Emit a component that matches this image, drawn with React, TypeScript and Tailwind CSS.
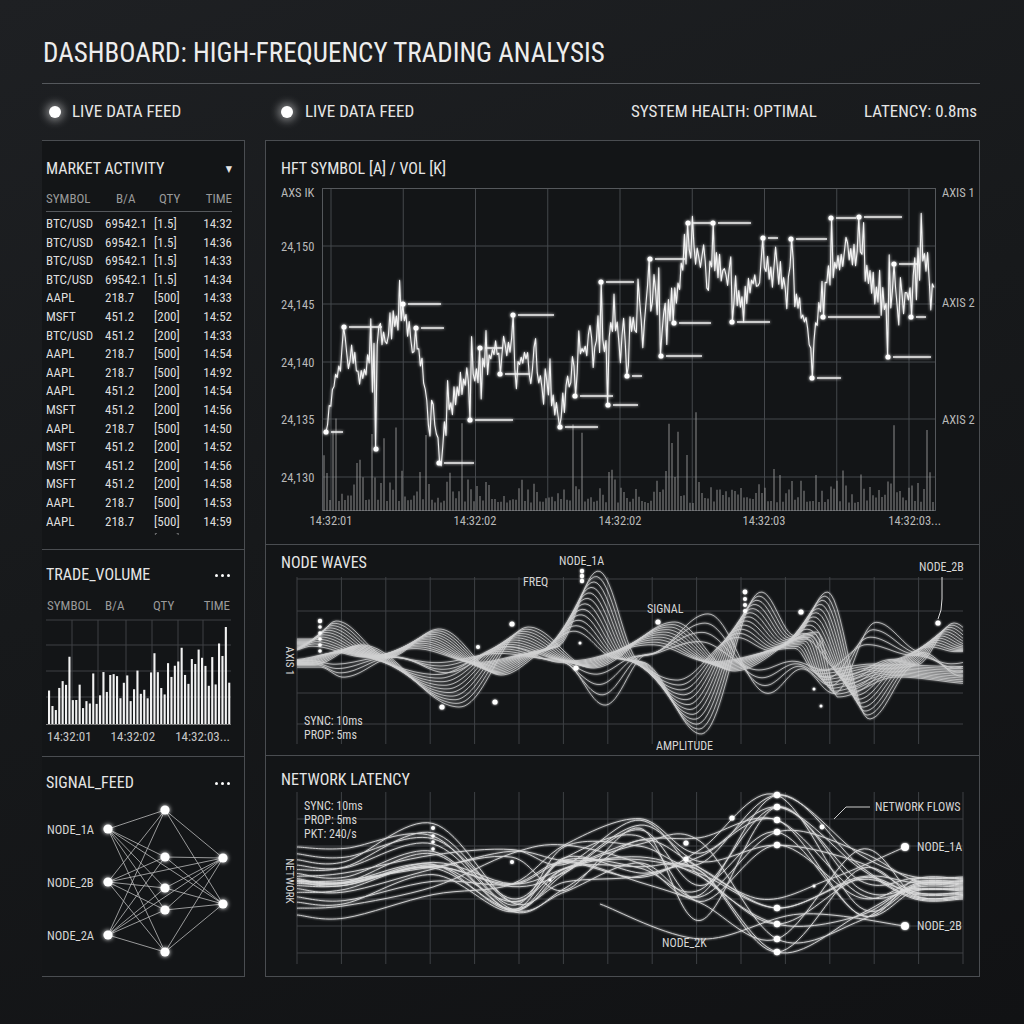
import React from "react";

type Pt = [number, number];

const rng = (seed: number) => () => {
  seed = (seed + 0x6d2b79f5) | 0;
  let t = Math.imul(seed ^ (seed >>> 15), 1 | seed);
  t = (t + Math.imul(t ^ (t >>> 7), 61 | t)) ^ t;
  return ((t ^ (t >>> 14)) >>> 0) / 4294967296;
};

const smoothPath = (pts: Pt[]) => {
  let d = `M${pts[0][0]},${pts[0][1].toFixed(1)}`;
  for (let i = 0; i < pts.length - 1; i++) {
    const p0 = pts[i - 1] || pts[i];
    const p1 = pts[i];
    const p2 = pts[i + 1];
    const p3 = pts[i + 2] || p2;
    const c1x = p1[0] + (p2[0] - p0[0]) / 6;
    const c1y = p1[1] + (p2[1] - p0[1]) / 6;
    const c2x = p2[0] - (p3[0] - p1[0]) / 6;
    const c2y = p2[1] - (p3[1] - p1[1]) / 6;
    d += ` C${c1x.toFixed(1)},${c1y.toFixed(1)} ${c2x.toFixed(1)},${c2y.toFixed(1)} ${p2[0]},${p2[1].toFixed(1)}`;
  }
  return d;
};

const cosKeys = (keys: Pt[], x: number) => {
  if (x <= keys[0][0]) return keys[0][1];
  for (let i = 0; i < keys.length - 1; i++) {
    const [x0, y0] = keys[i];
    const [x1, y1] = keys[i + 1];
    if (x <= x1) {
      const t = (x - x0) / (x1 - x0);
      const s = (1 - Math.cos(Math.PI * t)) / 2;
      return y0 + (y1 - y0) * s;
    }
  }
  return keys[keys.length - 1][1];
};

const linKeys = (keys: Pt[], x: number) => {
  if (x <= keys[0][0]) return keys[0][1];
  for (let i = 0; i < keys.length - 1; i++) {
    const [x0, y0] = keys[i];
    const [x1, y1] = keys[i + 1];
    if (x <= x1) return y0 + ((y1 - y0) * (x - x0)) / (x1 - x0);
  }
  return keys[keys.length - 1][1];
};

const rows = [
  ["BTC/USD", "69542.1", "[1.5]", "14:32"],
  ["BTC/USD", "69542.1", "[1.5]", "14:36"],
  ["BTC/USD", "69542.1", "[1.5]", "14:33"],
  ["BTC/USD", "69542.1", "[1.5]", "14:34"],
  ["AAPL", "218.7", "[500]", "14:33"],
  ["MSFT", "451.2", "[200]", "14:52"],
  ["BTC/USD", "451.2", "[200]", "14:33"],
  ["AAPL", "218.7", "[500]", "14:54"],
  ["AAPL", "218.7", "[500]", "14:92"],
  ["AAPL", "451.2", "[200]", "14:54"],
  ["MSFT", "451.2", "[200]", "14:56"],
  ["AAPL", "218.7", "[500]", "14:50"],
  ["MSFT", "451.2", "[200]", "14:52"],
  ["MSFT", "451.2", "[200]", "14:56"],
  ["MSFT", "451.2", "[200]", "14:58"],
  ["AAPL", "218.7", "[500]", "14:53"],
  ["AAPL", "218.7", "[500]", "14:59"],
  ["BTC/USD", "451.2", "[200]", "14:33"],
];

const Dots = () => (
  <span className="flex gap-[3px]">
    <i className="h-[3px] w-[3px] rounded-full bg-white" />
    <i className="h-[3px] w-[3px] rounded-full bg-white" />
    <i className="h-[3px] w-[3px] rounded-full bg-white" />
  </span>
);

const Glow = ({ id, d = 1.6 }: { id: string; d?: number }) => (
  <filter id={id} x="-20%" y="-20%" width="140%" height="140%">
    <feGaussianBlur stdDeviation={d} result="b" />
    <feMerge>
      <feMergeNode in="b" />
      <feMergeNode in="SourceGraphic" />
    </feMerge>
  </filter>
);

// main price chart
const priceKeys: Pt[] = [
  [326, 420], [345, 345], [360, 380], [380, 340], [403, 315], [420, 360], [440, 445],
  [455, 395], [480, 370], [510, 345], [535, 370], [560, 410], [580, 355], [600, 330],
  [625, 330], [650, 300], [670, 310], [690, 250], [720, 270], [740, 300], [765, 270],
  [790, 280], [812, 340], [830, 265], [860, 255], [880, 300], [905, 305], [920, 245], [935, 290],
];

const markers: [number, number, number][] = [
  [326, 433, 12], [344, 328, 33], [376, 450, 0], [403, 305, 33], [416, 329, 23],
  [439, 464, 30], [470, 421, 38], [480, 349, 17], [500, 375, 25], [513, 316, 36],
  [560, 428, 33], [575, 397, 33], [601, 283, 28], [608, 406, 25], [627, 377, 10],
  [650, 260, 30], [661, 357, 36], [674, 324, 32], [688, 224, 20], [713, 224, 33],
  [732, 323, 33], [763, 239, 10], [791, 240, 31], [812, 379, 24], [823, 318, 52],
  [831, 219, 20], [859, 218, 38], [888, 358, 38], [894, 265, 18], [911, 318, 10],
];

const PriceChart = () => {
  const r = rng(11);
  const pts: Pt[] = [];
  let flip = 1;
  for (let x = 326; x <= 935; x += 1.6) {
    const b = linKeys(priceKeys, x);
    flip = -flip;
    let n = flip * r() * 14 + (r() - 0.5) * 10;
    if (r() < 0.2) n += (r() < 0.5 ? -1 : 1) * (14 + r() * 26);
    pts.push([x, Math.max(205, Math.min(470, b + n))]);
  }
  markers.forEach(([mx, my]) => {
    let best = 0;
    pts.forEach((p, i) => {
      if (Math.abs(p[0] - mx) < Math.abs(pts[best][0] - mx)) best = i;
    });
    pts[best] = [pts[best][0], my];
  });
  const line = pts.map((p, i) => `${i ? "L" : "M"}${p[0].toFixed(1)},${p[1].toFixed(1)}`).join("");
  const bars: number[][] = [];
  for (let x = 324; x <= 934; x += 3) {
    let h = 8 + r() * r() * 36;
    if (r() < 0.08) h += 25 + r() * 55;
    bars.push([x, h]);
  }
  const gridX = Array.from({ length: 9 }, (_, k) => 331 + k * 72.25);
  const gridY = [247, 305, 363, 420, 478];
  const yLabels = ["24,150", "24,145", "24,140", "24,135", "24,130"];
  return (
    <svg width={713} height={365} className="block">
      <defs>
        <Glow id="pg" d={1.4} />
      </defs>
      <g transform="translate(-266,-180)">
        {gridX.map((x) => (
          <line key={x} x1={x} x2={x} y1={190} y2={512} stroke="#45484c" strokeWidth={1} />
        ))}
        {gridY.map((y) => (
          <line key={y} x1={322} x2={936} y1={y} y2={y} stroke="#45484c" strokeWidth={1} />
        ))}
        <rect x={322.5} y={189.5} width={613} height={322} fill="none" stroke="#55585c" />
        {bars.map(([x, h]) => (
          <line key={x} x1={x} x2={x} y1={512} y2={512 - h} stroke="#9a9a9a" strokeWidth={1.2} opacity={0.75} />
        ))}
        <g filter="url(#pg)">
          <path d={line} fill="none" stroke="#f4f4f4" strokeWidth={1.1} strokeLinejoin="round" />
          {markers.map(([x, y, l]) => (
            <g key={`${x}-${y}`}>
              <circle cx={x} cy={y} r={2.6} fill="#fff" />
              {l > 0 && <line x1={x + 5} x2={x + 5 + l} y1={y} y2={y} stroke="#f0f0f0" strokeWidth={1.5} />}
            </g>
          ))}
        </g>
        <g fill="#b9b9b9" fontSize={12.5}>
          <text x={281} y={198}>AXS IK</text>
          {yLabels.map((t, i) => (
            <text key={t} x={281} y={gridY[i] + 4.5}>{t}</text>
          ))}
          <text x={942} y={198}>AXIS 1</text>
          <text x={942} y={308}>AXIS 2</text>
          <text x={942} y={425}>AXIS 2</text>
          <text x={331} y={526} textAnchor="middle">14:32:01</text>
          <text x={475} y={526} textAnchor="middle">14:32:02</text>
          <text x={620} y={526} textAnchor="middle">14:32:02</text>
          <text x={764} y={526} textAnchor="middle">14:32:03</text>
          <text x={941} y={526} textAnchor="end">14:32:03...</text>
        </g>
      </g>
    </svg>
  );
};

// node waves
const W1: Pt[] = [
  [297, 18], [320, 36], [373, 0], [423, 28], [485, -18], [540, 10], [582, 86], [625, -5],
  [685, -77], [745, 65], [779, 21], [811, 65], [853, -62], [900, -8], [938, 34], [963, 18],
];
const W2: Pt[] = [
  [297, -8], [345, 12], [443, -50], [512, 30], [576, -11], [658, 35], [717, -14],
  [801, 25], [821, -40], [880, -20], [963, -27],
];

const wavePath = (keys: Pt[], s: number, shift: number) => {
  let d = "";
  for (let x = 297; x <= 963; x += 3) {
    const y = 658 - s * cosKeys(keys, x - shift);
    d += `${x === 297 ? "M" : "L"}${x},${y.toFixed(1)}`;
  }
  return d;
};

const NodeWaves = () => {
  const gridX = Array.from({ length: 15 }, (_, k) => 297 + k * 44.4);
  const gridY = [580, 612, 694, 725];
  const fam1 = [
    ...Array.from({ length: 12 }, (_, i) => wavePath(W1, 0.3 + (0.7 * i) / 11, i * 2.2 - 8)),
    ...Array.from({ length: 4 }, (_, i) => wavePath(W1, -0.2 - 0.12 * i, 14 + i * 3)),
  ];
  const fam2 = Array.from({ length: 10 }, (_, i) => wavePath(W2, 0.35 + (0.65 * i) / 9, i * 2.5 - 6));
  const dots: [number, number, number][] = [
    [320, 622, 2.2], [320, 628, 1.8], [320, 634, 1.8], [320, 640, 1.8], [320, 646, 1.8], [320, 652, 1.8],
    [478, 648, 2], [512, 625, 2.6], [495, 703, 2.6], [442, 708, 2.6], [582, 572, 2.2], [582, 577, 2.2],
    [582, 582, 2.2], [576, 669, 2.6], [580, 644, 1.5], [658, 623, 2.6], [745, 593, 2.4], [745, 600, 2],
    [745, 606, 2], [745, 612, 2], [801, 613, 2.6], [814, 690, 1.5], [821, 707, 1.5], [938, 624, 2.6],
  ];
  return (
    <svg width={713} height={182} className="block overflow-visible">
      <defs>
        <Glow id="wg" d={1.3} />
      </defs>
      <g transform="translate(-266,-574)">
        {gridX.map((x) => (
          <line key={x} x1={x} x2={x} y1={578} y2={745} stroke="#3e4145" />
        ))}
        {gridY.map((y) => (
          <line key={y} x1={297} x2={963} y1={y} y2={y} stroke="#3e4145" />
        ))}
        <g filter="url(#wg)" fill="none" stroke="#ffffff" strokeWidth={0.8} opacity={0.8}>
          {fam1.map((d, i) => (
            <path key={`a${i}`} d={d} />
          ))}
          {fam2.map((d, i) => (
            <path key={`b${i}`} d={d} />
          ))}
        </g>
        <line x1={297} x2={963} y1={658} y2={658} stroke="#fff" strokeWidth={2.6} filter="url(#wg)" />
        <g fill="#fff" filter="url(#wg)">
          {dots.map(([x, y, r]) => (
            <circle key={`${x}-${y}`} cx={x} cy={y} r={r} />
          ))}
        </g>
        <path d="M942,578 L942,600 Q942,612 938,620" fill="none" stroke="#ddd" strokeWidth={1} />
        <g fill="#d6d6d6" fontSize={12}>
          <text x={559} y={566}>NODE_1A</text>
          <text x={523} y={587}>FREQ</text>
          <text x={647} y={614}>SIGNAL</text>
          <text x={919} y={572}>NODE_2B</text>
          <text x={656} y={751}>AMPLITUDE</text>
          <text x={304} y={726}>SYNC: 10ms</text>
          <text x={304} y={740}>PROP: 5ms</text>
          <text x={290} y={658} textAnchor="middle" transform="rotate(90 286 658)" fontSize={11}>
            AXIS 1
          </text>
        </g>
      </g>
    </svg>
  );
};

// network latency
const NetworkLatency = () => {
  const r = rng(31);
  const nodeYs = [796, 808, 821, 833, 846, 909, 925, 940, 953];
  const gridX = Array.from({ length: 16 }, (_, k) => 297 + k * 44.4);
  const gridY = [820, 847, 900, 927, 954];
  const lines: string[] = [];
  for (let i = 0; i < 20; i++) {
    const t = i / 19;
    const c = (t - 0.5) * 2;
    const y0 = 882 + c * Math.abs(c) * 34;
    const pts: Pt[] = [
      [297, y0],
      [345, y0 + (r() - 0.5) * 8],
      [433, 829 + t * 60 + (r() - 0.5) * 24],
      [512, 850 + r() * 75],
      [565, 870 + (r() - 0.5) * 50],
      [640, 818 + r() * 70],
      [700, 825 + r() * 115],
      [777, nodeYs[i % 9]],
      [860, 850 + r() * 75],
      [915, 878 + t * 22],
      [963, 878 + t * 22],
    ];
    lines.push(smoothPath(pts));
  }
  lines.push(smoothPath([[686, 860], [760, 900], [830, 880], [905, 848]]));
  lines.push(smoothPath([[600, 905], [700, 940], [800, 915], [905, 927]]));
  const dots: [number, number, number][] = [
    [433, 829, 2], [433, 837, 1.8], [433, 843, 1.8], [433, 850, 1.8],
    [732, 819, 2.6], [686, 844, 2.6], [686, 860, 2.6], [822, 828, 2.4], [814, 887, 1.5],
    [512, 863, 2], [550, 881, 1.5],
    ...nodeYs.map((y) => [777, y, 3.2] as [number, number, number]),
    [905, 848, 4], [905, 927, 4],
  ];
  return (
    <svg width={713} height={186} className="block overflow-visible">
      <defs>
        <Glow id="ng" d={1.3} />
      </defs>
      <g transform="translate(-266,-791)">
        {gridX.map((x) => (
          <line key={x} x1={x} x2={x} y1={793} y2={965} stroke="#3e4145" />
        ))}
        {gridY.map((y) => (
          <line key={y} x1={297} x2={963} y1={y} y2={y} stroke="#3e4145" />
        ))}
        <g filter="url(#ng)" fill="none" stroke="#fff" strokeWidth={0.9} opacity={0.85}>
          {lines.map((d, i) => (
            <path key={i} d={d} />
          ))}
        </g>
        <g fill="#fff" filter="url(#ng)">
          {dots.map(([x, y, rr]) => (
            <circle key={`${x}-${y}`} cx={x} cy={y} r={rr} />
          ))}
        </g>
        <path d="M834,820 L846,808 L870,808" fill="none" stroke="#ccc" strokeWidth={1} />
        <g fill="#d6d6d6" fontSize={12}>
          <text x={304} y={811}>SYNC: 10ms</text>
          <text x={304} y={825}>PROP: 5ms</text>
          <text x={304} y={839}>PKT: 240/s</text>
          <text x={875} y={812}>NETWORK FLOWS</text>
          <text x={917} y={852}>NODE_1A</text>
          <text x={917} y={931}>NODE_2B</text>
          <text x={662} y={948}>NODE_2K</text>
          <text x={290} y={878} textAnchor="middle" transform="rotate(90 286 878)" fontSize={11}>
            NETWORK
          </text>
        </g>
      </g>
    </svg>
  );
};

// trade volume
const VolumeBars = () => {
  const r = rng(5);
  const bars: number[][] = [];
  for (let x = 48; x <= 229; x += 3.4) {
    const trend = ((x - 48) / 181) * 28;
    let h = 10 + r() * 34 + trend;
    if (r() < 0.15) h += 20 + r() * 25;
    bars.push([x, Math.min(97, h)]);
  }
  return (
    <svg width={202} height={112} className="block">
      <g transform="translate(-42,-618)">
        {[623, 648, 674, 700].map((y) => (
          <line key={y} x1={46} x2={231} y1={y} y2={y} stroke="#3e4145" />
        ))}
        {[72, 98, 126, 152, 178, 203].map((x) => (
          <line key={x} x1={x} x2={x} y1={623} y2={727} stroke="#3e4145" />
        ))}
        {bars.map(([x, h]) => (
          <rect key={x} x={x} y={727 - h} width={2.1} height={h} fill="#f2f2f2" />
        ))}
        <line x1={46} x2={231} y1={727.5} y2={727.5} stroke="#777" />
      </g>
    </svg>
  );
};

// signal feed
const SignalNet = () => {
  const L: Pt[] = [[108, 830], [108, 883], [108, 936]];
  const M: Pt[] = [[165, 811], [165, 858], [165, 889], [165, 911], [165, 953]];
  const R: Pt[] = [[223, 859], [223, 905]];
  const edges: [Pt, Pt][] = [];
  L.forEach((a) => M.forEach((b) => edges.push([a, b])));
  M.forEach((a) => R.forEach((b) => edges.push([a, b])));
  edges.push([L[1], R[0]], [L[0], R[1]], [L[2], R[0]]);
  return (
    <svg width={202} height={183} className="block">
      <defs>
        <Glow id="sg" d={2} />
      </defs>
      <g transform="translate(-42,-794)">
        <g stroke="#d8d8d8" strokeWidth={0.8} opacity={0.85}>
          {edges.map(([a, b], i) => (
            <line key={i} x1={a[0]} y1={a[1]} x2={b[0]} y2={b[1]} />
          ))}
        </g>
        <g fill="#fff" filter="url(#sg)">
          {[...L, ...M, ...R].map(([x, y]) => (
            <circle key={`${x}-${y}`} cx={x} cy={y} r={4.6} />
          ))}
        </g>
        <g fill="#d6d6d6" fontSize={12.5}>
          <text x={47} y={834.5}>NODE_1A</text>
          <text x={47} y={887.5}>NODE_2B</text>
          <text x={47} y={940.5}>NODE_2A</text>
        </g>
      </g>
    </svg>
  );
};

const LeftColumn = () => (
  <div className="flex w-[203px] flex-col border-t border-r border-[#4a4d51] bg-[#131517]">
    <section className="h-[409px] overflow-hidden border-b border-[#4a4d51] pl-[4px] pr-[12px] pt-[18px]">
      <div className="flex h-[20px] items-center justify-between text-[16px] leading-[20px] text-[#e6e6e6]">
        <span>MARKET ACTIVITY</span>
        <span className="text-[9px]">▼</span>
      </div>
      <div className="mt-[11px] grid h-[22px] grid-cols-[59px_49px_1fr_auto] border-b border-[#55585c] text-[13px] leading-[18px] text-[#9a9a9a]">
        <span>SYMBOL</span>
        <span className="pl-[11px]">B/A</span>
        <span className="pl-[5px]">QTY</span>
        <span>TIME</span>
      </div>
      <div className="mt-[3px] h-[320px] overflow-hidden">
        {rows.map((row, i) => (
          <div
            key={i}
            className={`grid h-[18.6px] grid-cols-[59px_49px_1fr_auto] text-[13px] leading-[18.6px] text-[#dedede] ${
              i === rows.length - 1 ? "opacity-40" : ""
            }`}
          >
            <span>{row[0]}</span>
            <span>{row[1]}</span>
            <span>{row[2]}</span>
            <span>{row[3]}</span>
          </div>
        ))}
      </div>
    </section>
    <section className="h-[207px] border-b border-[#4a4d51] pl-[4px] pr-[14px] pt-[15px]">
      <div className="flex h-[20px] items-center justify-between text-[16px] leading-[20px] text-[#e6e6e6]">
        <span>TRADE_VOLUME</span>
        <Dots />
      </div>
      <div className="mt-[12px] flex h-[18px] text-[13px] leading-[18px] text-[#9a9a9a]">
        <span className="w-[59px] pl-[1px]">SYMBOL</span>
        <span className="w-[48px]">B/A</span>
        <span>QTY</span>
        <span className="ml-auto">TIME</span>
      </div>
      <div className="-ml-[4px] -mr-[14px]">
        <VolumeBars />
      </div>
      <div className="flex h-[20px] text-[13px] leading-[20px] text-[#c8c8c8]">
        <span className="w-[69px] pl-[1px]">14:32:01</span>
        <span className="w-[69px]">14:32:02</span>
        <span className="whitespace-nowrap">14:32:03...</span>
      </div>
    </section>
    <section className="h-[220px] border-b border-[#4a4d51] pt-[16px]">
      <div className="flex h-[20px] items-center justify-between pl-[4px] pr-[14px] text-[16px] leading-[20px] text-[#e6e6e6]">
        <span>SIGNAL_FEED</span>
        <Dots />
      </div>
      <SignalNet />
    </section>
  </div>
);

const RightPanel = () => (
  <div className="flex w-[715px] flex-col border border-[#4a4d51] bg-[#131517]">
    <section className="h-[404px] border-b border-[#4a4d51] pt-[18px]">
      <div className="h-[20px] pl-[15px] text-[16px] leading-[20px] text-[#e6e6e6]">HFT SYMBOL [A] / VOL [K]</div>
      <PriceChart />
    </section>
    <section className="h-[211px] border-b border-[#4a4d51] pt-[8px]">
      <div className="h-[20px] pl-[15px] text-[16px] leading-[20px] text-[#e6e6e6]">NODE WAVES</div>
      <NodeWaves />
    </section>
    <section className="h-[220px] pt-[14px]">
      <div className="h-[20px] pl-[15px] text-[16px] leading-[20px] text-[#e6e6e6]">NETWORK LATENCY</div>
      <NetworkLatency />
    </section>
  </div>
);

export default function App() {
  return (
    <div className="h-[1024px] w-[1024px] overflow-hidden bg-[linear-gradient(160deg,#1e2023_0%,#17191b_45%,#111214_100%)] pl-[42px] pr-[44px] pt-[38px] text-[#e4e4e4] [font-family:'Liberation_Sans_Narrow','Roboto_Condensed','DejaVu_Sans_Condensed',Roboto,sans-serif]">
      <h1 className="pl-[1px] text-[27px] leading-[30px] text-[#ededed]">DASHBOARD: HIGH-FREQUENCY TRADING ANALYSIS</h1>
      <div className="mt-[15px] h-px bg-[#55585c]" />
      <div className="flex h-[56px] items-center text-[17px] text-[#e6e6e6]">
        <div className="flex w-[223px] items-center">
          <span className="ml-[7px] h-3 w-3 rounded-full bg-white shadow-[0_0_8px_3px_rgba(255,255,255,0.45)]" />
          <span className="ml-[11px]">LIVE DATA FEED</span>
        </div>
        <div className="flex items-center">
          <span className="ml-[16px] h-3 w-3 rounded-full bg-white shadow-[0_0_8px_3px_rgba(255,255,255,0.45)]" />
          <span className="ml-[12px]">LIVE DATA FEED</span>
        </div>
        <span className="ml-auto">SYSTEM HEALTH: OPTIMAL</span>
        <span className="ml-[47px] mr-[3px]">LATENCY: 0.8ms</span>
      </div>
      <div className="flex h-[837px] gap-[20px]">
        <LeftColumn />
        <RightPanel />
      </div>
    </div>
  );
}
